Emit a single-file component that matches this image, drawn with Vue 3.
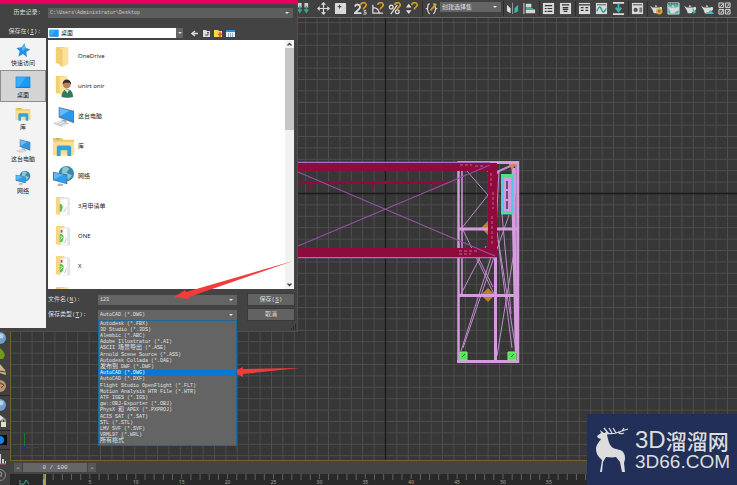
<script setup>
import { ref } from 'vue'

const leftTools = [['link'], ['pivot0', 'pivot']]
const snapTools = ['snap25', 'angle', 'percent', 'spinner']
const rightTools = [
  ['mirror', 'align'],
  ['sheet', 'layers'],
  ['panels', 'curve', 'down'],
  ['material'],
  ['pot-gear', 'pot-frame', 'pot-cursor', 'pot-cloud', 'quad'],
]
const places = [
  { name: '快速访问', icon: 'star' },
  { name: '桌面', icon: 'desktop' },
  { name: '库', icon: 'library' },
  { name: '这台电脑', icon: 'computer' },
  { name: '网络', icon: 'network' },
]
const place = ref('桌面')
const files = [
  { name: 'OneDrive', icon: 'folder' },
  { name: 'unirt onir', icon: 'user' },
  { name: '这台电脑', icon: 'computer' },
  { name: '库', icon: 'library' },
  { name: '网络', icon: 'network' },
  { name: '3月申请单', icon: 'papers' },
  { name: 'ONE', icon: 'docs' },
  { name: 'X', icon: 'docs' },
  { name: '', icon: 'folder' },
]
const formats = [
  'Autodesk (*.FBX)', '3D Studio (*.3DS)', 'Alembic (*.ABC)', 'Adobe Illustrator (*.AI)',
  'ASCII 场景导出 (*.ASE)', 'Arnold Scene Source (*.ASS)', 'Autodesk Collada (*.DAE)',
  '发布到 DWF (*.DWF)', 'AutoCAD (*.DWG)', 'AutoCAD (*.DXF)',
  'Flight Studio OpenFlight (*.FLT)', 'Motion Analysis HTR File (*.HTR)', 'ATF IGES (*.IGS)',
  'gw::OBJ-Exporter (*.OBJ)', 'PhysX 和 APEX (*.PXPROJ)', 'ACIS SAT (*.SAT)', 'STL (*.STL)',
  'LMV SVF (*.SVF)', 'VRML97 (*.WRL)', '所有格式',
]
const format = ref('AutoCAD (*.DWG)')
const history = ref('C:\\Users\\Administrator\\Desktop')
const fileName = ref('123')
const runs = (text) => text.split(/([\u4e00-\u9fff]+)/).filter(Boolean)
  .map((t) => ({ t, cjk: /[\u4e00-\u9fff]/.test(t) }))

const step = 11.4
const vLines = Array.from({ length: 150 }, (_, i) => 385.5 + (i - 50) * step)
const hLines = Array.from({ length: 100 }, (_, i) => 193.5 + (i - 30) * step)
const ticks = Array.from({ length: 101 }, (_, i) => ({ n: i, x: 34 + i * 9.18 }))
const sideTools = ['ball', 'leaf', 'hand', 'face', '-', 'ball', 'lock', '-', 'dark', '-', 'bars', 'help']
</script>

<template>
  <div class="app">
    <svg class="defs" aria-hidden="true">
      <defs>
        <symbol id="folder" viewBox="0 0 24 24"><path d="M4 2h9v19l-9-2z" fill="#f3cf73" /><path d="M8 3l9-1v18l-6 3-3-2z" fill="#fbe19a" /><path d="M8 3v18l3 2V5z" fill="#e9bd5b" opacity=".6" /></symbol>
        <symbol id="user" viewBox="0 0 24 24"><path d="M4 1h9v19l-9-1z" fill="#f3cf73" /><path d="M8 2l8-1v19l-5 2-3-2z" fill="#fbe19a" /><circle cx="15.500" cy="10" r="4" fill="#b9815c" /><path d="M11 10c0-7 9-7 9 0l-2-2h-5z" fill="#332b27" /><path d="M10 23c0-11 12-11 12 0-3 1-9 1-12 0z" fill="#34785a" /><path d="M13 15l3 4 2-4z" fill="#dfe8e4" /></symbol>
        <symbol id="computer" viewBox="0 0 24 24"><path d="M7 2l16 4v13L7 13z" fill="#5c7c94" /><path d="M8 3l14 4v10L8 12z" fill="#2799ee" /><path d="M8 3l10 3-10 6z" fill="#65bcf6" /><path d="M11 15l4 1v3h-5z" fill="#9da5ab" /><path d="M1 19l9-3 8 3-8 4z" fill="#bfc8ce" /><path d="M4 19l6-2M7 20l6-2M9 22l6-2" stroke="#f7f7f7" /></symbol>
        <symbol id="library" viewBox="0 0 24 24"><path d="M1 3h9l2 2h11v16H1z" fill="#f0ca66" /><path d="M1 7h22v14H1z" fill="#fbdf91" /><path d="M4 4h4" stroke="#8fbf65" stroke-width="1.500" /><path d="M5 22v-9q0-2 2-2h11q2 0 2 2v9h-4v-6H9v6z" fill="#34a2dc" /></symbol>
        <symbol id="network" viewBox="0 0 24 24"><circle cx="15" cy="9" r="8" fill="#3d88aa" /><path d="M11 3q4-3 7 1l-3 4 6 3-4 4-7-5z" fill="#8cc7d7" /><path d="M1 7l15 3v10L1 16z" fill="#4a7795" /><path d="M2 8l13 3v8L2 15z" fill="#2c9ff0" /><path d="M2 8l10 2-10 5z" fill="#62b9f2" /><path d="M7 19l5 1-1 2H5z" fill="#aeb6bc" /></symbol>
        <symbol id="papers" viewBox="0 0 24 24"><path d="M4 2h9v20l-9-2z" fill="#f6d681" /><path d="M8 3l8-1 3 2v17l-8 1-3-2z" fill="#e9e9e9" /><path d="M9 5l7-1v17l-7 1z" fill="#fafafa" /><path d="M8 9q5 0 2 8l-2 1z" fill="#63bf49" /><path d="M12 18l3-5" stroke="#c9cccd" /></symbol>
        <symbol id="docs" viewBox="0 0 24 24"><path d="M4 1h9v21l-9-2z" fill="#f6d681" /><path d="M8 3l8-1 3 2v17l-8 1-3-2z" fill="#e3e3e3" /><path d="M9 4l7-1v18l-7 1z" fill="#fafafa" /><path d="M9 5h2v3H9z" fill="#d84848" /><path d="M8 9q5 0 4 5t-4 4z" fill="#63c44b" /><path d="M9 12l2 1-2 2" fill="none" stroke="#e8f6e4" /><path d="M13 19l2-5" stroke="#c9cccd" /></symbol>
        <symbol id="star" viewBox="0 0 24 24"><path d="M14 2l2 7 7 2-6 4 1 8-6-5-7 4 2-8-5-5 8-1z" fill="#2790e0" /><path d="M14 2l2 7-4 5-2-5z" fill="#5eb5f1" /></symbol>
        <symbol id="desktop" viewBox="0 0 24 24"><path d="M1 4h22v17H1z" fill="#0f7fd0" /><path d="M2 5h20v14H2z" fill="#1b9cf4" /><path d="M2 5h14L6 19H2z" fill="#38adfa" /></symbol>

        <symbol id="link" viewBox="0 0 14 14"><path d="M1 1h4v5H1zM8 1h4v5H8z" fill="#ccc" /><path d="M3 4v6M10 4v6M1 8l2 3 2-3M8 8l2 3 2-3" fill="none" stroke="#37a58f" stroke-width="1.500" /></symbol>
        <symbol id="pivot0" viewBox="0 0 14 14"><path d="M7 1v12M1 7h12M5 3l2-2 2 2M5 11l2 2 2-2M3 5L1 7l2 2M11 5l2 2-2 2" fill="none" stroke="#d8d8d8" stroke-width="1.300" /></symbol>
        <symbol id="pivot" viewBox="0 0 14 14"><rect x="1" y="1" width="12" height="12" rx="1" fill="#d9d9d9" /><path d="M6 3v4M4 5h4" stroke="#333" fill="none" /></symbol>
        <symbol id="magnet" viewBox="0 0 14 14"><path d="M7 3c2-4 7-2 6 1-1 2-3 2-3 4" fill="none" stroke="#d39b28" stroke-width="1.800" /></symbol>
        <symbol id="snap25" viewBox="0 0 14 14"><path d="M1 5q1-3 4-2 3 2 0 5l-4 4h7" fill="none" stroke="#ddd" stroke-width="2" /><path d="M13 9h-2v2h2v2h-3" fill="none" stroke="#ddd" /><use href="#magnet" /></symbol>
        <symbol id="angle" viewBox="0 0 14 14"><path d="M2 3v9h11M2 6q6 0 7 6" fill="none" stroke="#ddd" stroke-width="1.400" /><use href="#magnet" /></symbol>
        <symbol id="percent" viewBox="0 0 14 14"><circle cx="3.500" cy="5.500" r="2" fill="none" stroke="#ddd" stroke-width="1.400" /><circle cx="10" cy="10.500" r="2" fill="none" stroke="#ddd" stroke-width="1.400" /><path d="M3 13l7-10" stroke="#ddd" stroke-width="1.400" /><use href="#magnet" /></symbol>
        <symbol id="spinner" viewBox="0 0 14 14"><path d="M1 6l3-4 3 4zM1 9h6l-3 4z" fill="#ddd" /><use href="#magnet" /></symbol>
        <symbol id="braces" viewBox="0 0 14 14"><path d="M5 2Q3 2 3 5T1 7q2 0 2 2t2 4M9 2q2 0 2 3t2 2q-2 0-2 2t-2 4" fill="none" stroke="#ddd" stroke-width="1.300" /><path d="M6 9l6-7" stroke="#d39b28" stroke-width="2" /></symbol>
        <symbol id="mirror" viewBox="0 0 14 14"><path d="M1 3l4 4v5l-4-2z" fill="#ddd" /><path d="M7 1v12" stroke="#999" /><path d="M13 3L9 7v5l4-2z" fill="#3fb3b0" /></symbol>
        <symbol id="align" viewBox="0 0 14 14"><path d="M1 1v12" stroke="#ddd" /><path d="M3 2h6v4H3zM3 8h10v4H3z" fill="#d5d5d5" /><path d="M3 7h8" stroke="#3fb3b0" /></symbol>
        <symbol id="sheet" viewBox="0 0 14 14"><path d="M1 1h12v12H1z" fill="#d9d9d9" /><path d="M3 4h8M3 7h2m1 0h5M3 10h2m1 0h5" stroke="#343434" stroke-width="1.300" /></symbol>
        <symbol id="layers" viewBox="0 0 14 14"><path d="M1 1h12v12H1z" fill="#d9d9d9" /><path d="M3 3h8M4 6h6M4 8h6M5 10h4" stroke="#343434" stroke-width="1.300" /></symbol>
        <symbol id="panels" viewBox="0 0 14 14"><path d="M1 1h12v12H1z" fill="#d9d9d9" /><path d="M1 3h12M3 6h3m2 0h3M3 9h3m2 0h3" stroke="#343434" stroke-width="1.400" /></symbol>
        <symbol id="curve" viewBox="0 0 14 14"><path d="M1 1h12v12H1z" fill="#d9d9d9" /><path d="M2 3h10" stroke="#555" /><path d="M2 10q3-8 5-2t5-1" stroke="#249a93" stroke-width="1.500" fill="none" /></symbol>
        <symbol id="down" viewBox="0 0 14 14"><path d="M1 1h12M1 13h12" stroke="#ddd" stroke-width="2" /><path d="M7 2v7M4 6l3 4 3-4" fill="none" stroke="#3fb3b0" stroke-width="2" /></symbol>
        <symbol id="material" viewBox="0 0 14 14"><path d="M1 1h12v12H1z" fill="#d9d9d9" /><path d="M2 3h10" stroke="#444" /><circle cx="5" cy="8.500" r="2.300" fill="#555" /><path d="M9 6h3v5H9z" fill="#777" /></symbol>
        <symbol id="pot" viewBox="0 0 14 14"><path d="M0 4l3 2h7q3-2 3 1t-3 3l-2 2H4L3 9zM5 5q1-3 3 0z" fill="#d9d9d9" /></symbol>
        <symbol id="pot-gear" viewBox="0 0 14 14"><use href="#pot" /><circle cx="10" cy="10" r="2.500" fill="#8d7440" stroke="#dba637" stroke-width="1.800" /></symbol>
        <symbol id="pot-frame" viewBox="0 0 14 14"><path d="M1 1h12v12H1z" fill="#48b6af" stroke="#d4d4d4" /><path d="M1 2h12" stroke="#444" stroke-dasharray="2 1" /><use href="#pot" /></symbol>
        <symbol id="pot-cursor" viewBox="0 0 14 14"><use href="#pot" /><path d="M9 6l4 5-3 2z" fill="#3fb3b0" /></symbol>
        <symbol id="pot-cloud" viewBox="0 0 14 14"><use href="#pot" /><path d="M5 13q0-3 3-2 2-4 4 0 3 0 1 2z" fill="#3fc0ba" /></symbol>
        <symbol id="quad" viewBox="0 0 14 14"><path d="M1 1h5v5H1zM8 1h5v5H8zM1 8h5v5H1zM8 8h5v5H8z" fill="#555" stroke="#ddd" /><path d="M3 5l2-3M10 5l2-3M3 12l2-3M10 12l2-3" stroke="#ddd" /></symbol>

        <symbol id="ball" viewBox="0 0 12 16"><circle cx="0" cy="8" r="6" fill="#6f9ec8" /><circle cx="1" cy="6" r="2.500" fill="#b7d1e6" /></symbol>
        <symbol id="leaf" viewBox="0 0 12 16"><path d="M0 2l3 3 2 4-2 4H0z" fill="#72991c" /></symbol>
        <symbol id="hand" viewBox="0 0 12 16"><path d="M0 2l5 6 1 5-6-2z" fill="#cfb48d" /><path d="M0 9l5 1" stroke="#473829" /></symbol>
        <symbol id="face" viewBox="0 0 12 16"><circle cx="0" cy="8" r="6" fill="#b8936e" /><path d="M0 5l4 2-3 3" stroke="#62462e" fill="none" /></symbol>
        <symbol id="lock" viewBox="0 0 12 16"><path d="M0 2l4 3-4 3" fill="#ddd" /><path d="M1 9h5v5H1z" fill="#e5dcc7" /><path d="M2 9V6h3v3" fill="none" stroke="#ccc" /></symbol>
        <symbol id="dark" viewBox="0 0 12 16"><path d="M0 3h7v10H0z" fill="#0b0b0b" /><circle cx="0" cy="8" r="4" fill="#1683e4" /></symbol>
        <symbol id="bars" viewBox="0 0 12 16"><path d="M0 3h1v10H0zM2 8h2v5H2zM5 10h1v3H5z" fill="#ccc" /><path d="M0 13h6" stroke="#c64949" /></symbol>
        <symbol id="help" viewBox="0 0 12 16"><circle cx="0" cy="8" r="5.500" fill="none" stroke="#8b8b8b" /><path d="M0 5q3 0 1 3v2" fill="none" stroke="#aaa" /></symbol>
      </defs>
    </svg>

    <header class="toolbar">
      <div class="cluster wide">
        <div v-for="(g, i) in leftTools" :key="i" class="group">
          <button v-for="t in g" :key="t" class="tool" :aria-label="t"><svg><use :href="'#' + t" /></svg></button>
        </div>
        <div class="group">
          <button v-for="t in snapTools" :key="t" class="tool" :aria-label="t"><svg><use :href="'#' + t" /></svg></button>
        </div>
        <div class="group ruled">
          <button class="tool" aria-label="braces"><svg><use href="#braces" /></svg></button>
          <span class="picker">
            <select aria-label="创建选择集"><option>创建选择集</option></select>
            <i class="caret"></i>
          </span>
        </div>
      </div>
      <div class="cluster">
        <div v-for="(g, i) in rightTools" :key="i" class="group ruled">
          <button v-for="t in g" :key="t" class="tool" :aria-label="t"><svg><use :href="'#' + t" /></svg></button>
        </div>
      </div>
    </header>

    <aside class="side">
      <template v-for="(t, i) in sideTools" :key="i">
        <hr v-if="t === '-'">
        <button v-else class="side-tool" :aria-label="t"><svg><use :href="'#' + t" /></svg></button>
      </template>
    </aside>

    <main class="viewport">
      <svg class="scene">
        <g transform="translate(-11 -18)">
          <g stroke="#4e4e4e" stroke-width="1">
            <path v-for="x in vLines" :key="'v' + x" :d="`M${x} 0V2000`" />
            <path v-for="y in hLines" :key="'h' + y" :d="`M0 ${y}H3000`" />
          </g>
          <path d="M385.500 0V2000M0 193.500H3000" stroke="#1b1b1b" stroke-width="1.300" />

          <g fill="#b68424"><path d="M481 228l7-7 7 7-7 7z" /><path d="M481 295l7-7 7 7-7 7z" /></g>
          <g fill="none" stroke="#c08bcb" stroke-width="1">
            <path d="M466 170l22 25-27 34M461 294l25-48M461 351l30-94M463 348l31-91M463 230l31 64M478 257l15 30" />
            <path d="M497 232l19 119M498 240l14 108M497 356l18-110M509 215l-12 34M502 214l9 100M499 170l-3 60" />
            <path d="M464 165l35 8M497 172l20-9" stroke-width="2" />
          </g>
          <g fill="none" stroke="#d69adf">
            <path d="M458 162.500h61" stroke-width="3" />
            <path d="M458.500 161v202" stroke-width="2.500" />
            <path d="M462 163v132" stroke-width="1.500" />
            <path d="M518 161v202" stroke-width="2.500" />
            <path d="M457 361.500h62M458 229h61M458 295.500h59" stroke-width="3" />
            <path d="M495.500 257v104" stroke-width="3" />
            <path d="M513.500 168v48l3 135" stroke-width="3.500" />
            <path d="M509 163l7 10-3 40M516 163v190" stroke-width="1.500" />
          </g>
          <path d="M509 164h7l-4 6z" fill="#c48a65" />
          <path d="M298 162.500h192M298 257.500h199" stroke="#b06bc1" stroke-width="1.300" />
          <g fill="#900b3d">
            <path d="M298 163h199v8H298zM298 248h199v9H298zM488 163h9v94h-9z" />
            <path d="M298 181h152v3H298zM310 183h2v6h-2zM372 183h2v6h-2zM433 183h2v6h-2z" />
          </g>
          <path d="M298 164.500h190M298 249.500h190" stroke="#7a1741" />
          <path d="M460 165h12m3 1h8M459 251h20M459 254h12M491 173v14m2 5v17m-1 7v30" stroke="#c4668b" stroke-dasharray="3 2" />
          <path d="M298 172l197 84M298 246l192-81" fill="none" stroke="#9350a1" stroke-width="1.200" />
          <g>
            <path d="M502.500 176h10v37h-10z" fill="#d69adf" stroke="#55c9e5" stroke-width="3" />
            <path d="M507 181v29" stroke="#493652" stroke-width="1.500" stroke-dasharray="8 2" />
            <path d="M501 175.500h13M501 212.500h13" stroke="#49e384" stroke-width="3" />
          </g>
          <g fill="#4de650" stroke="#8ee58b" stroke-width="1"><path d="M460 352h7v8h-7zM508 352h8v8h-8z" /></g>
          <path d="M462 357l3-3M511 357l3-3" stroke="#247a2c" />

          <path d="M24.500 433v14" stroke="#1d7a28" /><path d="M25 447.500h14" stroke="#8e2222" /><path d="M23 446h3v3h-3z" fill="#2929a8" />
        </g>
      </svg>
    </main>

    <footer class="timeline">
      <div class="track">
        <button aria-label="上一帧">&lt;</button>
        <button class="frame">0 / 100</button>
        <button aria-label="下一帧">&gt;</button>
      </div>
      <svg class="ruler">
        <path d="M10 6v5M11 10h3l2-4 3 4" fill="none" stroke="#45a28c" />
        <path d="M33 0h3v11h-3z" fill="#b7a425" />
        <g v-for="t in ticks" :key="t.n">
          <path :d="`M${t.x} 0v${t.n % 5 ? 6 : 5}`" stroke="#626262" />
          <text v-if="t.n % 5 === 0" :x="t.x" y="10" text-anchor="middle">{{ t.n }}</text>
        </g>
      </svg>
    </footer>

    <section class="dialog" role="dialog" aria-label="保存">
      <div class="title"></div>
      <div class="line history">
        <label for="hist">历史记录:</label>
        <span class="picker">
          <select id="hist" v-model="history"><option>{{ history }}</option></select>
          <i class="caret"></i>
        </span>
      </div>
      <div class="line where">
        <label for="where">保存在(<u>I</u>):</label>
        <span class="picker light">
          <svg class="mini"><use href="#desktop" /></svg>
          <select id="where" v-model="place"><option v-for="p in places" :key="p.name">{{ p.name }}</option></select>
          <i class="caret"></i>
        </span>
        <div class="nav">
          <button aria-label="后退"><svg viewBox="0 0 9 9"><path d="M2 4.500h6M5 2L2 4.500 5 7" fill="none" stroke="#ddd" stroke-width="1.500" /></svg></button>
          <button aria-label="向上"><svg viewBox="0 0 9 9"><path d="M1 1h3l1 1h3v6H1z" fill="#ddd" /><path d="M3 6h3V3M5 4l1-1 1 1" fill="none" stroke="#555" /></svg></button>
          <button aria-label="新建文件夹"><svg viewBox="0 0 9 9"><path d="M0 1h4l1 1h3v6H0z" fill="#ffd54c" /><path d="M6 3v5M4 5.500h4" stroke="#bd6a1b" stroke-width="1.500" /></svg></button>
          <button aria-label="视图"><svg viewBox="0 0 9 9"><path d="M0 1h9v7H0z" fill="#eee" /><path d="M0 2h9" stroke="#238fe0" stroke-width="2" /><path d="M2 5h5M2 7h5" stroke="#3484c6" stroke-dasharray="1 1" /></svg></button>
        </div>
      </div>
      <div class="columns">
        <nav class="places">
          <button v-for="p in places" :key="p.name" :class="{ on: p.name === place }" @click="place = p.name">
            <svg><use :href="'#' + p.icon" /></svg>
            <span>{{ p.name }}</span>
          </button>
        </nav>
        <div class="pane">
          <div class="browser">
            <ul class="files">
              <li v-for="(f, i) in files" :key="i"><svg><use :href="'#' + f.icon" /></svg><span>{{ f.name }}</span></li>
            </ul>
            <div class="scroll">
              <svg viewBox="0 0 9 7"><path d="M2.500 5l2-2 2 2" fill="none" stroke="#444" stroke-width="1.300" /></svg>
              <div class="thumb"></div>
              <svg viewBox="0 0 9 7"><path d="M2.500 2l2 2 2-2" fill="none" stroke="#444" stroke-width="1.300" /></svg>
            </div>
          </div>
          <form class="form" @submit.prevent>
            <label for="fname">文件名(<u>N</u>):</label>
            <span class="picker"><input id="fname" v-model="fileName"><i class="caret"></i></span>
            <button type="submit">保存(<u>S</u>)</button>
            <label for="ftype">保存类型(<u>T</u>):</label>
            <span class="picker">
              <select id="ftype" v-model="format"><option v-for="f in formats" :key="f">{{ f }}</option></select>
              <i class="caret"></i>
              <ul class="menu" role="listbox">
                <li v-for="f in formats" :key="f" role="option" :aria-selected="f === format" :class="{ on: f === format }" @click="format = f">
                  <span v-for="(r, i) in runs(f)" :key="i" :class="{ cjk: r.cjk }">{{ r.t }}</span>
                </li>
              </ul>
            </span>
            <button type="button">取消</button>
          </form>
        </div>
      </div>
      <svg class="grip" viewBox="0 0 6 6"><path d="M4 1h1M2 3h1M4 3h1M0 5h1M2 5h1M4 5h1" stroke="#171717" /></svg>
    </section>

    <svg class="arrows" aria-hidden="true">
      <path d="M174 297l11-7 1 2 107-31-104 36v2z" fill="#f23c3c" />
      <path d="M232 372l11-5v2l57-1-57 6v3z" fill="#f23c3c" />
    </svg>

    <div class="brand">
      <svg viewBox="0 0 34 46">
        <path d="M1 9l4-3-1-3 4 3 5-1-2 3 1 4c1 4 2 7 5 9 4 2 8 1 10 4 2 2 2 5 2 7l-1 4 1 9h-3l-2-10-4-5c-4 1-7 0-10 0l-3 5-1 10H4l2-12c-4-3-6-7-6-11 0-4 3-7 5-10l-3-1z" fill="#ddd" />
        <path d="M9 6c5 1 10 1 14-1l9-3M12 6L8 1M16 6l-3-5M20 6l-3-5M22 5c2 2 4 2 6 1M26 4l2-3" fill="none" stroke="#ddd" stroke-width="1.300" />
      </svg>
      <div class="words">
        <div class="big"><span>3D</span>溜溜网</div>
        <div class="small">3D66.COM</div>
      </div>
    </div>
  </div>
</template>

<style>
body { margin: 0; overflow: hidden; }
</style>

<style scoped>
.app {
  position: relative; display: grid; grid-template-columns: 10px 1fr; grid-template-rows: 17px 1fr 24px;
  height: 100vh; overflow: hidden; background: #414141; color: #ddd;
  font: 6px/8px "Noto Sans", "Noto Sans CJK SC", sans-serif;
}
.app *, .app *::before { box-sizing: border-box; }
.defs { position: absolute; width: 0; height: 0; }
svg { display: block; }
ul { list-style: none; margin: 0; padding: 0; }
button, input, select { font: inherit; color: inherit; border: 0; padding: 0; margin: 0; background: none; appearance: none; }
select, input { outline: 0; min-width: 0; }

.toolbar { grid-column: 1 / -1; display: flex; gap: 3px; padding-left: 295px; background: #414141; }
.cluster { display: flex; gap: 3px; }
.wide { gap: 4px; }
.group { display: flex; align-items: center; gap: 1px; }
.ruled { box-shadow: -2px 0 0 -1px #2c2c2c; }
.tool { width: 16px; height: 16px; display: grid; place-items: center; }
.tool svg { width: 13px; height: 13px; }
.picker { position: relative; display: flex; align-items: center; background: #646464; color: #e2e2e2; height: 10px; }
.picker select, .picker input { flex: 1; height: 100%; padding-left: 2px; }
.toolbar .picker { width: 61px; align-self: flex-start; margin-top: 2px; }
.caret { margin: 0 4px 0 2px; border: 2px solid transparent; border-top: 2px solid #e4e4e4; border-bottom: 0; pointer-events: none; }

.side { grid-row: 2 / 4; display: flex; flex-direction: column; justify-content: flex-end; padding-bottom: 2px; overflow: hidden; }
.side-tool { height: 16px; flex: none; }
.side-tool svg { width: 12px; height: 16px; }
.side hr { width: 100%; height: 1px; margin: 1px 0; border: 0; background: #252525; flex: none; }

.viewport { border: 1px solid #75642d; border-right: 0; background: #373737; overflow: hidden; }
.scene { width: 100%; height: 100%; }

.timeline { display: flex; flex-direction: column; overflow: hidden; }
.track { display: flex; gap: 1px; padding: 2px 4px; height: 13px; background: #444; }
.track button { width: 8px; height: 9px; background: #575757; line-height: 8px; }
.track .frame { width: 64px; background: #666; font-family: "Liberation Mono", monospace; }
.ruler { width: 100%; height: 11px; background: #292929; }
.ruler text { font-size: 5px; fill: #aaa; }

.dialog {
  position: absolute; left: 0; top: 0; width: 298px; display: flex; flex-direction: column;
  background: #434343; border: solid #97294f; border-width: 0 1px 1px 0;
  font-family: "Liberation Mono", "Noto Sans CJK SC", monospace;
}
.title { height: 4px; background: #e8005f; }
.line { display: grid; grid-template-columns: 41px 1fr; column-gap: 7px; align-items: center; padding-right: 4px; }
.line label { text-align: right; white-space: nowrap; }
.history { height: 18px; }
.history .picker { font-size: 5px; background: #5d5d5d; color: #ccc; }
.where { grid-template-columns: 41px 135px 1fr; height: 16px; align-items: end; }
.where label { line-height: 12px; }
.light { background: #fff; color: #222; font-family: "Noto Sans CJK SC", sans-serif; }
.mini { width: 10px; height: 10px; margin-left: 1px; }
.light .caret { margin: 0; width: 7px; height: 10px; border: 0; background: #656565; display: grid; place-items: center; }
.light .caret::before { content: ""; border: 2px solid transparent; border-top-color: #ddd; border-bottom: 0; }
.nav { display: flex; gap: 3px; }
.nav button, .nav svg { width: 9px; height: 9px; }

.columns { display: grid; grid-template-columns: 46px 1fr; column-gap: 2px; padding-right: 3px; }
.places { background: #f3f3f3; margin-bottom: 3px; color: #222; font-family: "Noto Sans CJK SC", sans-serif; }
.places button { display: flex; flex-direction: column; align-items: center; gap: 1px; width: 100%; height: 32px; padding-top: 3px; border: 1px solid transparent; }
.places svg { width: 16px; height: 16px; }
.places .on { background: #d4d4d4; border-color: #8e8e8e; }
.pane { padding-top: 2px; display: flex; flex-direction: column; }
.browser { display: grid; grid-template-columns: 1fr 9px; height: 249px; background: #fff; overflow: hidden; }
.files { color: #222; font-family: "Noto Sans", "Noto Sans CJK SC", sans-serif; min-height: 0; padding-top: 1px; }
.files li { display: flex; align-items: center; gap: 3px; height: 30px; padding-left: 4px; }
.files svg { width: 23px; height: 23px; }
.scroll { display: flex; flex-direction: column; background: #f2f2f2; }
.scroll svg { width: 9px; height: 8px; }
.thumb { height: 82px; margin-bottom: auto; background: #c6c6c6; }
.form { display: grid; grid-template-columns: 50px 1fr 46px; align-items: center; row-gap: 4px; padding: 5px 0 11px; }
.form label { white-space: nowrap; }
.form .picker { font-size: 5px; margin-right: 11px; }
.form button { height: 11px; background: #626262; box-shadow: 0 0 0 1px #3a3a3a; }
.menu { position: absolute; left: 0; right: 0; top: 10px; z-index: 2; height: 126px; display: grid; grid-auto-rows: 1fr; border: 1px solid #1f6896; background: #646464; }
.menu li { display: flex; align-items: center; line-height: 6px; min-height: 0; padding-left: 1px; white-space: pre; }
.menu .on { background: #0878d7; color: #fff; }
.cjk { font-size: 6px; }
.grip { position: absolute; right: 0; bottom: 1px; width: 6px; height: 6px; }

.arrows { position: absolute; left: 0; top: 0; width: 300px; height: 380px; pointer-events: none; }
.brand { position: absolute; right: 0; bottom: 0; display: flex; align-items: center; gap: 5px; padding: 12px 8px 12px 9px; height: 71px; width: 150px; background: #212f59; color: #ddd; }
.brand svg { width: 34px; height: 46px; flex: none; }
.words { white-space: nowrap; }
.big { display: flex; align-items: center; height: 24px; font: 500 21px/24px "Noto Sans CJK SC", sans-serif; }
.big span { font: 24px/24px "Liberation Sans", sans-serif; }
.small { font: 19px/20px "Liberation Sans", sans-serif; }
</style>
